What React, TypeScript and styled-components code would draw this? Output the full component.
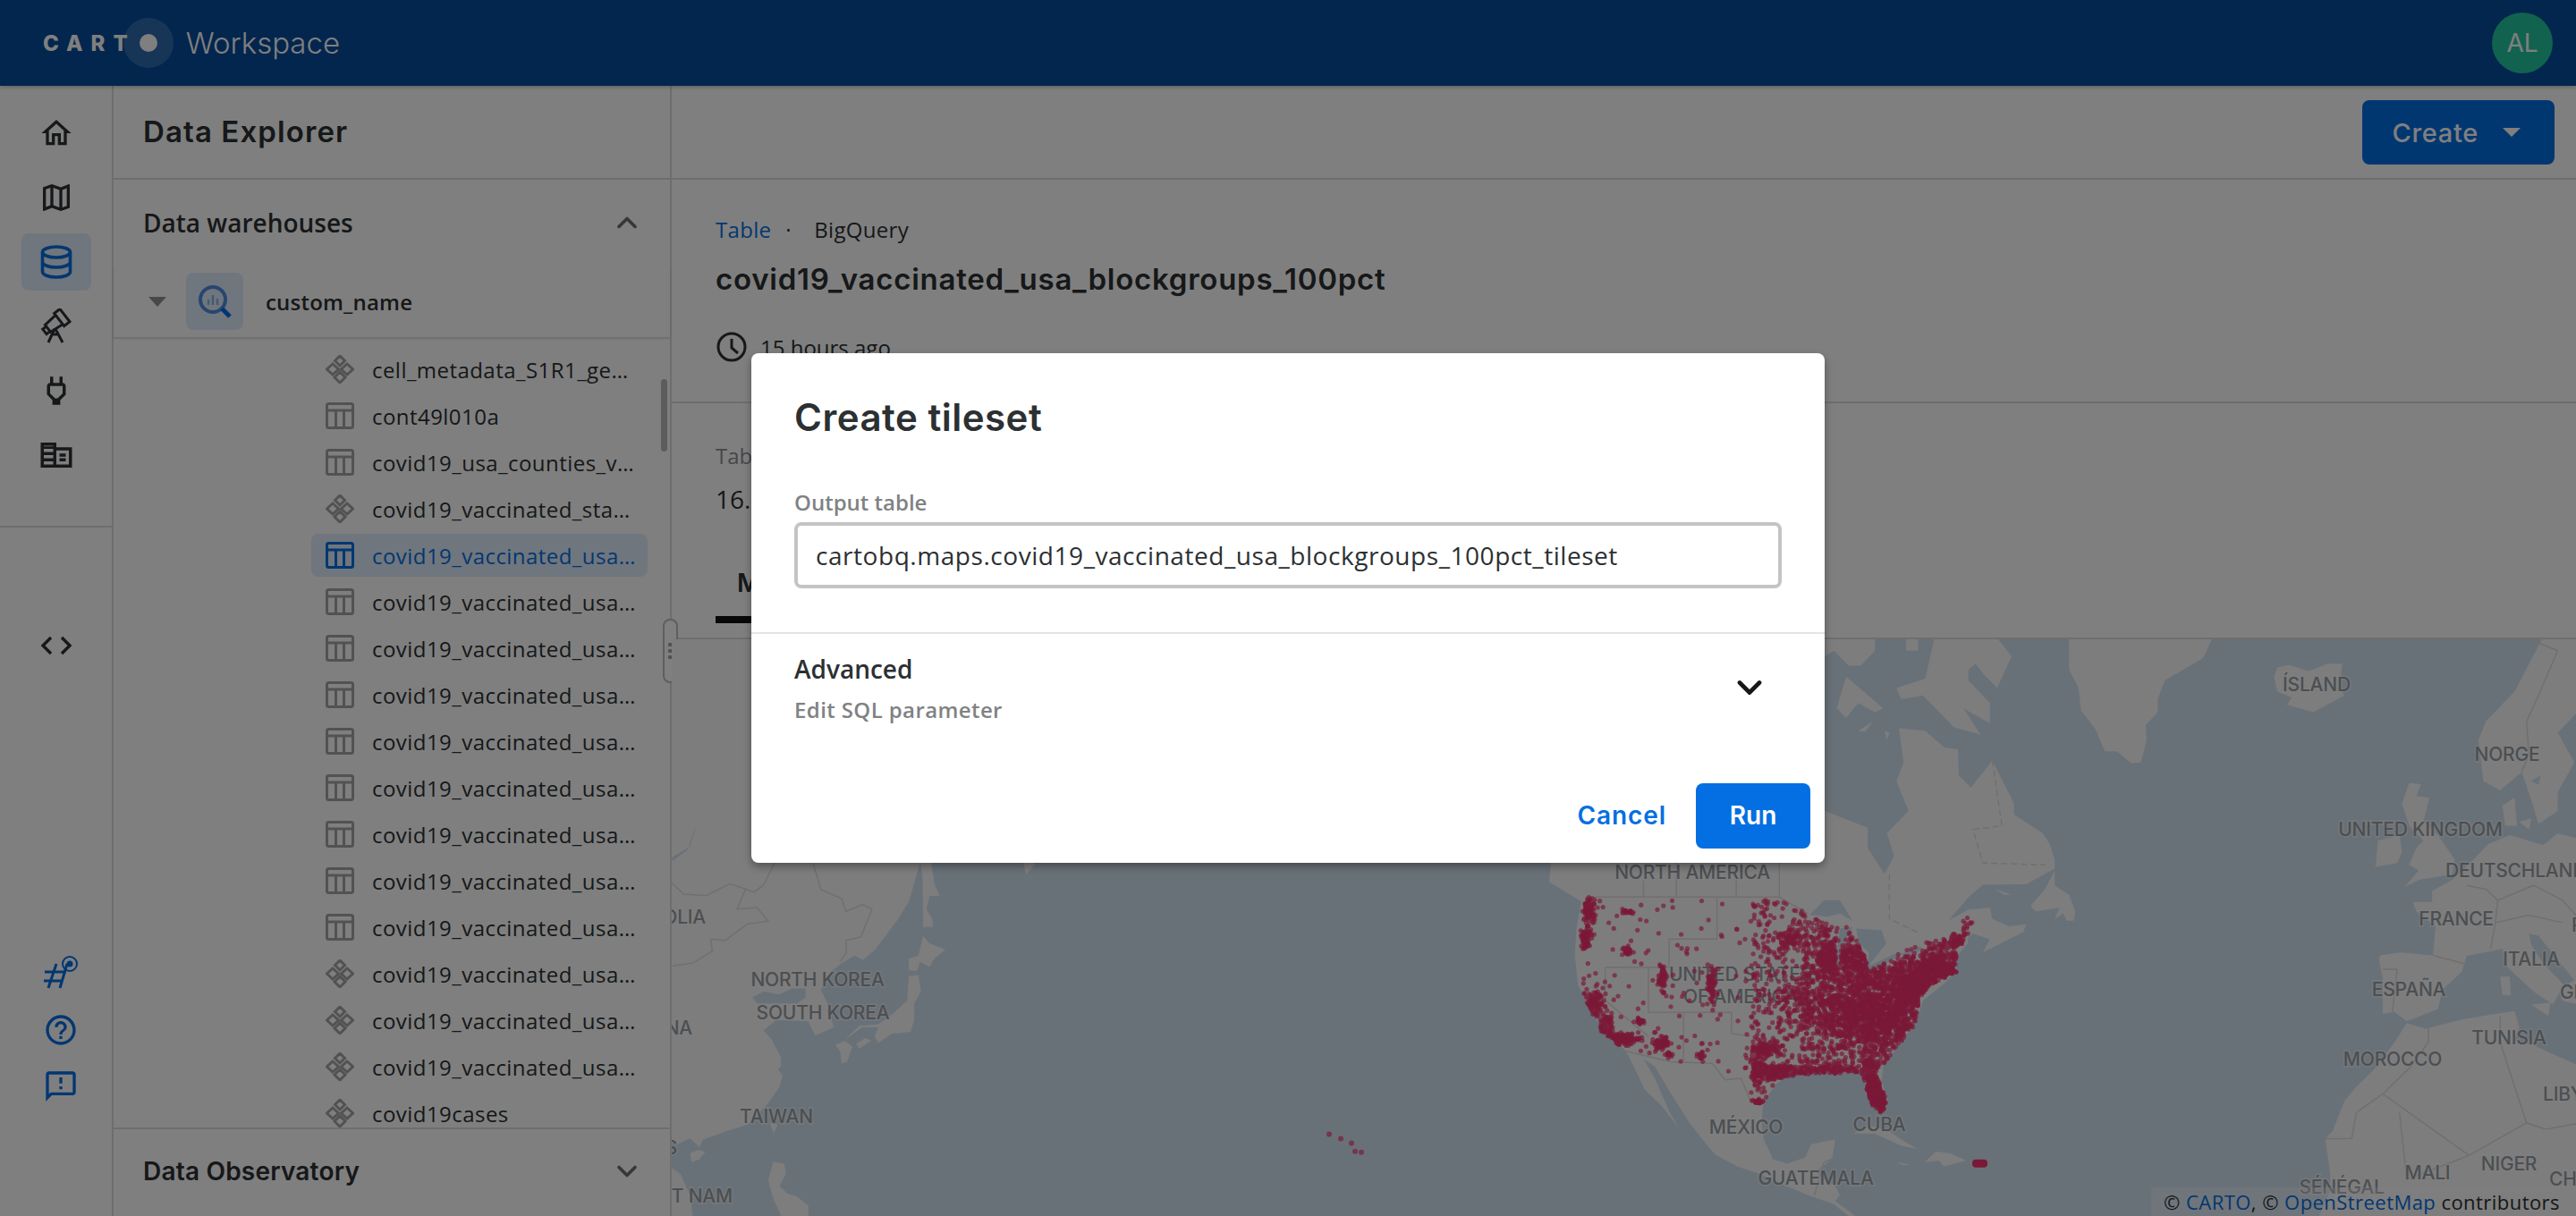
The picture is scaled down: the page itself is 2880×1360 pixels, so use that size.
import React from 'react';
import styled, { createGlobalStyle } from 'styled-components';
import { ChevronDown, ChevronUp } from 'lucide-react';

const HEADING_FONT = `'Inter', 'Open Sans', sans-serif`;
const BODY_FONT = `'Open Sans', 'Noto Sans', sans-serif`;

const INK = '#2c3032';
const PRIMARY = '#036fe2';
const LINE = '#dcdcdc';
const WATER = '#d2e2f0';
const LAND = '#fbfbfb';

const GlobalStyle = createGlobalStyle`
  html, body {
    margin: 0;
    width: 100%;
    height: 100%;
    overflow: hidden;
    background: #fff;
    font-family: ${BODY_FONT};
    color: ${INK};
  }
  * { box-sizing: border-box; }
`;

const Page = styled.div`
  position: relative;
  display: flex;
  flex-direction: column;
  width: 2880px;
  height: 1360px;
  overflow: hidden;
`;

const TopBar = styled.header`
  position: relative;
  z-index: 1;
  flex: none;
  display: flex;
  align-items: center;
  justify-content: space-between;
  height: 96px;
  padding: 0 26px 0 48px;
  background: #064c9e;
  box-shadow: 0 2px 4px rgba(0, 0, 0, 0.2);
  color: #fff;
`;

const Logo = styled.div`
  display: flex;
  align-items: center;
`;

const LogoWord = styled.span`
  font-family: ${HEADING_FONT};
  font-weight: 800;
  font-size: 24px;
  letter-spacing: 9px;
`;

const LogoRing = styled.span`
  display: flex;
  align-items: center;
  justify-content: center;
  width: 56px;
  height: 56px;
  margin-left: -14px;
  border-radius: 50%;
  background: rgba(255, 255, 255, 0.17);

  &::after {
    content: '';
    width: 20px;
    height: 20px;
    border-radius: 50%;
    background: #fff;
  }
`;

const ProductName = styled.span`
  margin-left: 14px;
  font-family: ${HEADING_FONT};
  font-weight: 300;
  font-size: 33px;
`;

const Avatar = styled.div`
  display: flex;
  align-items: center;
  justify-content: center;
  width: 68px;
  height: 68px;
  border-radius: 50%;
  background: #24c4a0;
  font-family: ${HEADING_FONT};
  font-size: 28px;
`;

const Body = styled.div`
  flex: 1;
  display: flex;
  min-height: 0;
`;

const Rail = styled.nav`
  flex: none;
  display: flex;
  flex-direction: column;
  width: 127px;
  border-right: 2px solid ${LINE};
`;

const RailTop = styled.div`
  display: flex;
  flex-direction: column;
  gap: 8px;
  height: 494px;
  padding: 21px 0 0 24px;
  border-bottom: 2px solid ${LINE};
`;

const RailButton = styled.div<{ $active?: boolean }>`
  flex: none;
  display: flex;
  align-items: center;
  justify-content: center;
  width: 78px;
  height: 64px;
  border-radius: 8px;
  background: ${({ $active }) => ($active ? 'rgba(3, 111, 226, 0.12)' : 'transparent')};
  color: ${({ $active }) => ($active ? PRIMARY : INK)};
`;

const RailCode = styled(RailButton)`
  margin: 100px 0 0 24px;
`;

const RailBottom = styled.div`
  display: flex;
  flex-direction: column;
  align-items: center;
  gap: 23px;
  width: 136px;
  margin-top: auto;
  padding-bottom: 125px;
  color: ${PRIMARY};
`;

const Explorer = styled.aside`
  position: relative;
  flex: none;
  display: flex;
  flex-direction: column;
  width: 624px;
  border-right: 2px solid ${LINE};
`;

const ExplorerTitle = styled.h1`
  flex: none;
  display: flex;
  align-items: center;
  height: 105px;
  margin: 0;
  padding: 0 0 2px 33px;
  border-bottom: 2px solid ${LINE};
  font-family: ${HEADING_FONT};
  font-weight: 600;
  font-size: 33px;
  letter-spacing: 1.1px;
`;

const SectionHead = styled.div<{ $height: number }>`
  flex: none;
  display: flex;
  align-items: center;
  justify-content: space-between;
  height: ${({ $height }) => $height}px;
  padding: 0 30px 0 33px;
  font-weight: 600;
  font-size: 28px;
`;

const ObservatoryHead = styled(SectionHead)`
  padding-bottom: 3px;
  border-top: 2px solid ${LINE};
  font-family: ${HEADING_FONT};
  letter-spacing: 0.2px;
`;

const ConnectionRow = styled.div`
  flex: none;
  display: flex;
  align-items: center;
  height: 80px;
  padding: 0 0 0 39px;
  box-shadow: 0 2px 2px rgba(0, 0, 0, 0.14);
  font-weight: 600;
  font-size: 24px;
  letter-spacing: 0.2px;
`;

const Caret = styled.span`
  width: 0;
  height: 0;
  border-left: 10px solid transparent;
  border-right: 10px solid transparent;
  border-top: 11px solid #8f9192;
`;

const ConnectionBadge = styled.span`
  display: flex;
  align-items: center;
  justify-content: center;
  width: 64px;
  height: 64px;
  margin: 0 25px 0 22px;
  border-radius: 8px;
  background: rgba(3, 111, 226, 0.12);
`;

const TreeList = styled.ul`
  flex: 1;
  min-height: 0;
  margin: 0;
  padding: 10px 0 0;
  list-style: none;
  overflow: hidden;
`;

const TreeRow = styled.li<{ $active?: boolean }>`
  display: flex;
  align-items: center;
  gap: 20px;
  height: 48px;
  margin: 2px 25px 4px 221px;
  padding-left: 16px;
  border-radius: 8px;
  background: ${({ $active }) => ($active ? 'rgba(3, 111, 226, 0.12)' : 'transparent')};
  color: ${({ $active }) => ($active ? PRIMARY : INK)};
  font-size: 24px;
  letter-spacing: 0.45px;
`;

const TreeIcon = styled.svg<{ $active?: boolean }>`
  flex: none;
  width: 32px;
  height: 32px;
  fill: none;
  stroke: ${({ $active }) => ($active ? PRIMARY : '#a4a5a6')};
  stroke-width: 3;
`;

const TreeLabel = styled.span`
  width: 296px;
  white-space: nowrap;
  overflow: hidden;
  text-overflow: ellipsis;
`;

const ScrollThumb = styled.span`
  position: absolute;
  top: 328px;
  right: 3px;
  width: 7px;
  height: 81px;
  border-radius: 4px;
  background: #b9b9b9;
`;

const ResizeHandle = styled.span`
  position: absolute;
  top: 596px;
  right: -9px;
  display: flex;
  flex-direction: column;
  align-items: center;
  justify-content: center;
  gap: 3px;
  width: 17px;
  height: 72px;
  border: 2px solid #bdbdbd;
  border-radius: 8px;
  background: #fff;

  i {
    width: 5px;
    height: 4px;
    border-radius: 1px;
    background: #a4a5a6;
  }
`;

const Main = styled.main`
  flex: 1;
  display: flex;
  flex-direction: column;
  min-width: 0;
`;

const MainToolbar = styled.div`
  flex: none;
  display: flex;
  justify-content: flex-end;
  height: 105px;
  padding: 16px 24px 0 0;
  border-bottom: 2px solid ${LINE};
`;

const CreateButton = styled.div`
  display: flex;
  align-items: center;
  gap: 27px;
  height: 72px;
  padding: 0 38px 0 33px;
  border-radius: 8px;
  background: ${PRIMARY};
  color: #fff;
  font-family: ${HEADING_FONT};
  font-weight: 500;
  font-size: 29px;
  letter-spacing: 0.7px;
`;

const CreateCaret = styled.span`
  width: 0;
  height: 0;
  border-left: 10px solid transparent;
  border-right: 10px solid transparent;
  border-top: 10px solid #fff;
`;

const InfoBlock = styled.section`
  flex: none;
  height: 250px;
  padding: 36px 0 0 49px;
  border-bottom: 2px solid ${LINE};
`;

const Breadcrumb = styled.div`
  display: flex;
  align-items: center;
  font-size: 24px;
  line-height: 40px;
  letter-spacing: 0.3px;

  b {
    font-weight: 400;
    color: ${PRIMARY};
  }
  i {
    width: 48px;
    padding-left: 16px;
    font-style: normal;
  }
`;

const TableName = styled.h2`
  margin: 15px 0 0;
  font-family: ${HEADING_FONT};
  font-weight: 600;
  font-size: 33px;
  line-height: 40px;
  letter-spacing: 0.75px;
`;

const UpdatedRow = styled.div`
  display: flex;
  align-items: center;
  gap: 14px;
  margin-top: 38px;
  font-size: 24px;
`;

const StatsBlock = styled.section`
  flex: none;
  height: 264px;
  padding: 44px 0 0 49px;
  border-bottom: 2px solid ${LINE};
`;

const StatLabel = styled.div`
  font-size: 24px;
  line-height: 30px;
  color: #8e8f90;
`;

const StatValue = styled.div`
  margin-top: 14px;
  font-size: 28px;
  line-height: 38px;
`;

const TabStrip = styled.div`
  display: flex;
  margin-top: 44px;
`;

const Tab = styled.div`
  height: 76px;
  padding: 14px 24px 0;
  border-bottom: 8px solid #111;
  font-family: ${HEADING_FONT};
  font-weight: 600;
  font-size: 28px;
`;

const MapPanel = styled.section`
  position: relative;
  flex: 1;
  min-height: 0;
  overflow: hidden;
  background: ${WATER};
`;

const MapCanvas = styled.svg`
  display: block;
  width: 100%;
  height: 100%;
`;

const MapLabel = styled.text`
  font-family: ${HEADING_FONT};
  font-weight: 500;
  font-size: 21px;
  letter-spacing: -0.2px;
  fill: #989ea5;
  stroke: rgba(255, 255, 255, 0.5);
  stroke-width: 3px;
  paint-order: stroke;
`;

const Border = styled.polyline<{ $dashed?: boolean }>`
  fill: none;
  stroke: #e6dcdc;
  stroke-width: 1.5;
  stroke-dasharray: ${({ $dashed }) => ($dashed ? '7 4' : 'none')};
`;

const Attribution = styled.div`
  position: absolute;
  right: 0;
  bottom: 0;
  display: flex;
  align-items: center;
  height: 32px;
  padding: 0 18px 0 14px;
  background: rgba(255, 255, 255, 0.3);
  border-radius: 4px 0 0 0;
  font-size: 22px;
  letter-spacing: 0.45px;
  white-space: pre;

  b {
    font-weight: 400;
    color: ${PRIMARY};
  }
`;

const Scrim = styled.div`
  position: absolute;
  z-index: 2;
  inset: 0;
  display: flex;
  align-items: center;
  justify-content: center;
  background: rgba(0, 0, 0, 0.5);
`;

const Modal = styled.div`
  display: flex;
  flex-direction: column;
  width: 1200px;
  height: 570px;
  border-radius: 8px;
  background: #fff;
  box-shadow: 0 4px 10px rgba(0, 0, 0, 0.35);
`;

const ModalBody = styled.div`
  flex: none;
  height: 314px;
  padding: 44px 48px 0;
  border-bottom: 2px solid #e4e4e4;
`;

const ModalTitle = styled.h3`
  margin: 0;
  font-family: ${HEADING_FONT};
  font-weight: 600;
  font-size: 42px;
  line-height: 56px;
  letter-spacing: 0.5px;
`;

const FieldLabel = styled.div`
  margin-top: 51px;
  font-weight: 600;
  font-size: 24px;
  line-height: 32px;
  color: #808284;
`;

const TextField = styled.div`
  display: flex;
  align-items: center;
  height: 74px;
  margin-top: 6px;
  padding-left: 20px;
  border: 4px solid #c4c4c4;
  border-radius: 8px;
  font-size: 28px;
  letter-spacing: 0.55px;
`;

const Advanced = styled.div`
  flex: 1;
  display: flex;
  justify-content: space-between;
  padding: 20px 62px 0 48px;
`;

const AdvancedTitle = styled.div`
  font-weight: 600;
  font-size: 28px;
  line-height: 38px;
`;

const AdvancedHint = styled.div`
  margin-top: 11px;
  font-weight: 600;
  font-size: 24px;
  line-height: 32px;
  letter-spacing: 0.4px;
  color: #808284;
`;

const AdvancedChevron = styled.span`
  margin-top: 18px;
  color: #16181a;
`;

const ModalActions = styled.div`
  flex: none;
  display: flex;
  align-items: center;
  justify-content: flex-end;
  gap: 33px;
  height: 90px;
  padding: 0 16px 16px 0;
`;

const TextButton = styled.span`
  font-family: ${HEADING_FONT};
  font-weight: 600;
  font-size: 28px;
  letter-spacing: 0.9px;
  color: ${PRIMARY};
`;

const RunButton = styled.span`
  display: flex;
  align-items: center;
  justify-content: center;
  width: 128px;
  height: 73px;
  border-radius: 8px;
  background: ${PRIMARY};
  color: #fff;
  font-family: ${HEADING_FONT};
  font-weight: 600;
  font-size: 28px;
`;

type Pt = [number, number];

// reference crops used while tracing, each with its own offset and scale
const crop = (ox: number, oy: number, sx: number, sy: number) => (pts: Pt[]): Pt[] =>
  pts.map(([x, y]) => [ox + x / sx, oy + y / sy] as Pt);
const west = crop(750, 960, 2.8, 3);
const usa = crop(1700, 960, 2.8, 3);
const east = crop(2040, 710, 1.867, 2.412);

const toPoints = (pts: Pt[]) => pts.map(([x, y]) => `${x.toFixed(1)},${y.toFixed(1)}`).join(' ');

const LAND_SHAPES: Pt[][] = [
  // asia
  west([[-10, -760], [790, -760], [780, 20], [745, 150], [710, 210], [640, 310], [600, 345], [575, 330], [535, 355], [500, 385], [470, 445], [490, 490], [510, 570], [452, 597], [430, 550], [330, 545], [290, 580], [315, 610], [345, 670], [345, 700], [335, 710], [350, 730], [340, 770], [300, 830], [240, 895], [180, 915], [100, 945], [90, 970], [60, 940], [20, 960], [-10, 930], [-10, 1030], [30, 1060], [60, 1130], [70, 1210], [-10, 1210]]),
  west([[60, 990], [85, 980], [108, 985], [90, 1010], [65, 1020]]),
  west([[310, 890], [335, 895], [322, 925]]),
  west([[782, 20], [815, 20], [825, 90], [842, 132], [810, 130], [800, 175], [820, 210], [820, 235], [790, 235], [788, 70]]),
  west([[790, 265], [810, 290], [860, 310], [825, 340], [810, 368], [780, 350], [770, 382], [745, 380], [745, 340], [775, 330]]),
  west([[745, 400], [775, 395], [783, 450], [762, 490], [762, 545], [750, 585], [690, 592], [650, 622], [638, 600], [650, 570], [600, 570], [545, 610], [590, 565], [650, 560], [700, 520], [740, 480]]),
  west([[515, 630], [545, 615], [568, 635], [552, 685], [535, 690], [530, 650]]),
  west([[580, 625], [610, 605], [628, 615], [590, 640]]),
  west([[1100, 0], [1140, 25], [1112, 60]]),
  west([[320, 1020], [355, 1025], [360, 1060], [340, 1100], [365, 1125], [395, 1135], [430, 1165], [430, 1210], [350, 1210], [320, 1140], [305, 1080]]),
  // north and central america
  [
    [1734, 800],
    ...usa([[95, 20], [90, 85], [190, 150], [175, 240], [170, 330], [180, 430], [240, 550], [330, 650], [345, 680], [390, 780], [440, 830], [495, 905], [465, 850], [420, 740], [385, 675], [420, 700], [470, 790], [530, 890], [585, 965], [610, 995], [680, 1035], [750, 1060], [820, 1095], [900, 1130], [980, 1160], [1040, 1210], [1060, 1210], [985, 1150], [1000, 1130], [985, 1100], [945, 1075], [925, 1050], [975, 1010], [985, 945], [910, 960], [890, 1005], [835, 1025], [790, 1010], [760, 940], [755, 880], [760, 820], [800, 760], [850, 720], [920, 710], [1000, 715], [1060, 710], [1080, 740], [1080, 790], [1110, 830], [1135, 860], [1148, 810], [1130, 750], [1135, 700], [1190, 620], [1235, 560], [1260, 480], [1330, 420], [1365, 380], [1355, 345], [1400, 290]]),
    ...east([[299, 820], [310, 810], [345, 825], [330, 860], [415, 805], [420, 785], [430, 740], [480, 635], [480, 610], [470, 570], [455, 540], [395, 490], [395, 460], [350, 345], [305, 418], [280, 385], [278, 315], [250, 310], [210, 265], [155, 258], [165, 350], [150, 400], [175, 480], [130, 540], [145, 600], [125, 650], [90, 580], [90, 525], [0, 480], [-60, 420]]),
    [1900, 800],
  ],
  // arctic islands and greenland
  east([[-20, 0], [105, 0], [105, 50], [75, 90], [50, 90], [20, 50], [-20, 80]]),
  east([[170, 0], [195, 0], [195, 50], [170, 50]]),
  east([[232, 0], [350, 0], [390, 65], [360, 150], [330, 110], [315, 85], [300, 100], [300, 130], [345, 190], [345, 245], [290, 205], [325, 275], [270, 255], [205, 170], [160, 180], [150, 150], [210, 125]]),
  east([[45, 120], [100, 180], [122, 205], [105, 215], [70, 190], [45, 230], [25, 205]]),
  east([[70, 265], [100, 240], [85, 268]]),
  east([[125, 265], [135, 270], [130, 290]]),
  east([[510, 0], [815, 0], [790, 70], [710, 130], [695, 180], [695, 215], [670, 250], [672, 290], [660, 350], [640, 352], [610, 320], [585, 320], [565, 260], [535, 210], [530, 150], [510, 100]]),
  east([[945, 95], [970, 88], [1010, 105], [1050, 85], [1080, 85], [1075, 150], [1085, 170], [1020, 215], [965, 195], [975, 175], [945, 160], [938, 120]]),
  // europe
  east([[1505, 0], [1575, 0], [1575, 210], [1530, 270], [1565, 350], [1530, 430], [1530, 480], [1490, 515], [1475, 450], [1455, 375], [1410, 425], [1375, 400], [1365, 290], [1380, 240], [1440, 160]]),
  east([[1415, 465], [1440, 445], [1445, 520], [1420, 520]]),
  east([[1450, 510], [1475, 500], [1470, 530]]),
  east([[1430, 545], [1500, 572], [1530, 540], [1575, 555], [1575, 1000], [1540, 990], [1535, 965], [1520, 1000], [1480, 965], [1425, 900], [1415, 850], [1340, 870], [1335, 890], [1330, 912], [1290, 960], [1280, 1012], [1215, 1045], [1190, 1020], [1165, 1025], [1165, 930], [1157, 880], [1160, 868], [1200, 860], [1270, 868], [1275, 790], [1235, 750], [1228, 725], [1268, 725], [1268, 695], [1310, 665], [1355, 610], [1385, 570]]),
  east([[1155, 560], [1200, 545], [1205, 590], [1195, 620], [1150, 630]]),
  east([[1205, 460], [1220, 405], [1245, 408], [1235, 440], [1262, 445], [1250, 510], [1280, 545], [1315, 610], [1310, 650], [1240, 665], [1210, 685], [1240, 640], [1220, 625], [1235, 580], [1250, 560], [1220, 520]]),
  east([[1410, 925], [1430, 925], [1432, 975], [1415, 975]]),
  east([[1475, 1000], [1515, 995], [1510, 1030]]),
  // africa
  east([[1215, 1050], [1255, 1065], [1330, 1040], [1400, 1025], [1440, 1018], [1450, 1060], [1440, 1095], [1480, 1110], [1575, 1165], [1575, 1575], [1030, 1575], [1055, 1500], [1055, 1450], [1045, 1360], [1060, 1340], [1085, 1260], [1110, 1220], [1150, 1170], [1190, 1100]]),
  // caribbean
  usa([[1040, 925], [1100, 900], [1150, 915], [1200, 950], [1240, 975], [1190, 965], [1110, 925]]),
  usa([[1265, 1020], [1300, 985], [1345, 990], [1395, 1015], [1325, 1035], [1310, 1015]]),
  usa([[1180, 1020], [1220, 1030], [1195, 1030]]),
];

const GREAT_LAKES: Pt[][] = [
  [[905, 195], [950, 145], [1000, 145], [1040, 215], [1000, 190], [960, 200]],
  [[1000, 240], [1040, 235], [1005, 300], [1000, 370], [985, 360], [995, 280]],
  [[1050, 240], [1130, 245], [1145, 290], [1085, 370], [1090, 320], [1060, 290]],
  [[1085, 385], [1190, 330], [1170, 325], [1090, 365]],
  [[1190, 325], [1250, 300], [1260, 310], [1200, 335]],
];

const WATER_SHAPES: Pt[][] = [
  ...GREAT_LAKES.map(usa),
  // st lawrence
  east([[258, 775], [300, 712], [330, 678], [420, 677], [480, 635], [470, 690], [432, 745], [420, 785], [385, 790], [350, 770], [345, 740], [300, 745]]),
  // adriatic
  east([[1470, 810], [1490, 815], [1530, 880], [1565, 935], [1545, 950], [1500, 890], [1475, 840]]),
  // bohai and baikal
  west([[255, 470], [290, 450], [340, 460], [380, 440], [422, 440], [422, 470], [395, 490], [330, 490], [270, 490]]),
  crop(740, 700, 1.742, 2.376)([[20, 630], [50, 600], [70, 520], [55, 590], [20, 620]]),
  // vanern
  east([[1475, 400], [1495, 385], [1490, 410]]),
];

const ISLANDS_OVER_WATER: Pt[][] = [
  east([[430, 735], [460, 690], [480, 640], [480, 680], [510, 705], [523, 750], [520, 775], [505, 775], [498, 755], [480, 770], [490, 740], [440, 750]]),
  east([[355, 690], [390, 705], [375, 705]]),
];

const BORDERS: Pt[][] = [
  west([[0, 85], [40, 125], [110, 130], [185, 90], [260, 118], [290, 95], [325, 20]]),
  west([[235, 105], [208, 175], [270, 170], [305, 215], [240, 225], [170, 280], [125, 275], [130, 315], [70, 355], [5, 365]]),
  west([[445, 20], [470, 110], [535, 140], [548, 183], [600, 160], [630, 175], [595, 268], [548, 280], [550, 320], [530, 350]]),
  usa([[205, 135], [810, 135], [900, 190]]),
  usa([[385, 80], [385, 135]]),
  usa([[488, 20], [488, 135]]),
  usa([[675, 80], [675, 135]]),
  usa([[810, 20], [810, 135]]),
  usa([[265, 370], [465, 370], [465, 275], [615, 275], [615, 135]]),
  usa([[400, 370], [400, 520], [660, 520], [660, 590], [720, 600]]),
  usa([[510, 520], [510, 680]]),
  usa([[330, 650], [470, 685], [600, 690], [640, 745], [690, 740], [720, 815]]),
  usa([[265, 370], [265, 480], [400, 600]]),
  usa([[920, 1130], [950, 1020], [975, 1010]]),
  east([[1045, 1360], [1100, 1360], [1110, 1290], [1165, 1240], [1345, 1405], [1465, 1318], [1505, 1335], [1568, 1320]]),
  east([[1165, 1240], [1225, 1165], [1260, 1100], [1260, 1065]]),
  east([[1200, 1290], [1215, 1470], [1345, 1405]]),
  east([[1465, 1318], [1430, 1180], [1410, 1100], [1410, 1030]]),
  east([[1165, 905], [1195, 905], [1185, 1020]]),
  east([[1270, 868], [1335, 890]]),
  east([[1340, 680], [1380, 690], [1405, 720], [1400, 780], [1390, 850]]),
  east([[1405, 720], [1480, 680], [1540, 720], [1568, 760]]),
  east([[1400, 780], [1470, 760], [1540, 780]]),
  east([[1470, 18], [1530, 50], [1490, 170], [1465, 240], [1470, 330], [1455, 375]]),
];

const DASHED_BORDERS: Pt[][] = [
  east([[135, 650], [135, 770], [200, 810]]),
  east([[350, 345], [370, 520], [310, 530], [330, 620], [460, 625]]),
];

const LABELS: { text: string; x: number; y: number; anchor?: 'start' | 'end' }[] = [
  { text: 'MONGOLIA', x: 789, y: 1035, anchor: 'end' },
  { text: 'CHINA', x: 774, y: 1158, anchor: 'end' },
  { text: 'NORTH KOREA', x: 914, y: 1104 },
  { text: 'SOUTH KOREA', x: 920, y: 1141 },
  { text: 'TAIWAN', x: 868, y: 1256 },
  { text: 'LAOS', x: 757, y: 1291, anchor: 'end' },
  { text: 'VIET NAM', x: 819, y: 1345, anchor: 'end' },
  { text: 'NORTH AMERICA', x: 1892, y: 985 },
  { text: 'UNITED STATES', x: 1946, y: 1098 },
  { text: 'OF AMERICA', x: 1946, y: 1123 },
  { text: 'MÉXICO', x: 1952, y: 1268 },
  { text: 'CUBA', x: 2101, y: 1265 },
  { text: 'GUATEMALA', x: 2030, y: 1325 },
  { text: 'ÍSLAND', x: 2590, y: 776 },
  { text: 'NORGE', x: 2803, y: 853 },
  { text: 'UNITED KINGDOM', x: 2706, y: 937 },
  { text: 'DEUTSCHLAND', x: 2734, y: 983, anchor: 'start' },
  { text: 'FRANCE', x: 2746, y: 1037 },
  { text: 'POLSKA', x: 2875, y: 1043, anchor: 'start' },
  { text: 'ITALIA', x: 2830, y: 1081 },
  { text: 'ESPAÑA', x: 2693, y: 1115 },
  { text: 'GREECE', x: 2862, y: 1118, anchor: 'start' },
  { text: 'TUNISIA', x: 2805, y: 1169 },
  { text: 'MOROCCO', x: 2675, y: 1193 },
  { text: 'LIBYA', x: 2843, y: 1232, anchor: 'start' },
  { text: 'NIGER', x: 2805, y: 1309 },
  { text: 'MALI', x: 2714, y: 1319 },
  { text: 'CHAD', x: 2850, y: 1326, anchor: 'start' },
  { text: 'SÉNÉGAL', x: 2618, y: 1335 },
];

const US_OUTLINE: Pt[] = [[205, 135], [810, 135], [900, 190], [985, 235], [1040, 235], [1090, 370], [1190, 320], [1270, 285], [1345, 270], [1395, 200], [1415, 215], [1405, 250], [1365, 320], [1365, 385], [1280, 430], [1250, 470], [1235, 560], [1190, 620], [1140, 690], [1110, 720], [1145, 810], [1135, 860], [1100, 830], [1075, 750], [1040, 720], [910, 730], [800, 740], [760, 830], [720, 815], [690, 740], [640, 720], [600, 690], [490, 685], [380, 650], [330, 650], [250, 580], [175, 420], [175, 330], [180, 230]];

const CLUSTERS: [number, number, number, number, number][] = [
  [215, 180, 10, 24, 90], [205, 265, 10, 24, 60], [335, 315, 10, 8, 25], [330, 183, 12, 5, 15],
  [228, 490, 18, 26, 120], [275, 560, 14, 24, 50], [310, 610, 30, 12, 140], [440, 625, 12, 12, 60],
  [465, 660, 5, 5, 15], [562, 665, 5, 9, 15], [598, 430, 7, 32, 70], [445, 405, 7, 22, 50],
  [372, 548, 7, 5, 25], [770, 640, 20, 14, 110], [800, 720, 22, 16, 100], [745, 715, 16, 22, 80],
  [745, 820, 12, 4, 30], [850, 275, 18, 16, 70], [965, 340, 22, 30, 170], [1040, 340, 32, 22, 140],
  [1240, 430, 48, 30, 480], [1300, 370, 42, 26, 300], [1370, 290, 16, 16, 50], [1100, 560, 60, 55, 320],
  [1100, 775, 14, 38, 300], [1130, 820, 6, 20, 60], [930, 710, 85, 8, 110], [1100, 420, 60, 45, 320],
  [1180, 530, 38, 45, 200], [1050, 520, 70, 38, 320], [900, 480, 60, 45, 160], [1105, 862, 6, 3, 8],
];

const inside = ([x, y]: Pt, poly: Pt[]) => {
  let hit = false;
  for (let i = 0, j = poly.length - 1; i < poly.length; j = i++) {
    const [xi, yi] = poly[i];
    const [xj, yj] = poly[j];
    if (yi > y !== yj > y && x < ((xj - xi) * (y - yi)) / (yj - yi) + xi) hit = !hit;
  }
  return hit;
};

const buildDots = (): Pt[] => {
  let seed = 41;
  const rand = () => {
    seed = (seed + 0x6d2b79f5) | 0;
    let t = Math.imul(seed ^ (seed >>> 15), 1 | seed);
    t = (t + Math.imul(t ^ (t >>> 7), 61 | t)) ^ t;
    return ((t ^ (t >>> 14)) >>> 0) / 4294967296;
  };
  const keep = (p: Pt) => inside(p, US_OUTLINE) && !GREAT_LAKES.some((lake) => inside(p, lake));
  const out: Pt[] = [];
  for (let i = 0; i < 14000; i++) {
    const p: Pt = [175 + rand() * 1240, 135 + rand() * 730];
    const density = p[0] < 720 ? 0.028 : p[0] < 880 ? 0.2 : 0.5;
    if (rand() < density && keep(p)) out.push(p);
  }
  CLUSTERS.forEach(([cx, cy, rx, ry, n]) => {
    for (let i = 0; i < n; i++) {
      const a = rand() * Math.PI * 2;
      const r = Math.sqrt(-2 * Math.log(1 - rand() * 0.98));
      const p: Pt = [cx + Math.cos(a) * r * rx, cy + Math.sin(a) * r * ry];
      if (keep(p)) out.push(p);
    }
  });
  return usa(out);
};

const DOTS = buildDots();
const HAWAII: Pt[] = [[1486, 1269], [1499, 1274], [1511, 1279], [1515, 1288], [1522, 1289]];

const WorldMap = () => (
  <MapCanvas viewBox="751 718 2129 642" preserveAspectRatio="none">
    <g fill={LAND}>
      {LAND_SHAPES.map((pts, i) => <polygon key={i} points={toPoints(pts)} />)}
    </g>
    <g fill={WATER}>
      {WATER_SHAPES.map((pts, i) => <polygon key={i} points={toPoints(pts)} />)}
    </g>
    <g fill={LAND}>
      {ISLANDS_OVER_WATER.map((pts, i) => <polygon key={i} points={toPoints(pts)} />)}
    </g>
    {BORDERS.map((pts, i) => <Border key={i} points={toPoints(pts)} />)}
    {DASHED_BORDERS.map((pts, i) => <Border key={i} $dashed points={toPoints(pts)} />)}
    {LABELS.map((l) => (
      <MapLabel key={l.text} x={l.x} y={l.y} textAnchor={l.anchor ?? 'middle'}>{l.text}</MapLabel>
    ))}
    <g fill="#f5306e" fillOpacity={0.68}>
      {DOTS.map(([x, y], i) => <circle key={i} cx={x} cy={y} r={2.6} />)}
      {HAWAII.map(([x, y], i) => <circle key={i} cx={x} cy={y} r={3} />)}
    </g>
    <rect x={2205} y={1297} width={17} height={9} rx={4} fill="#f5306e" />
  </MapCanvas>
);

const MuiIcon = ({ d, size = 40 }: { d: string; size?: number }) => (
  <svg width={size} height={size} viewBox="0 0 24 24" fill="currentColor"><path d={d} /></svg>
);

const HOME = 'M12 5.69l5 4.5V18h-2v-6H9v6H7v-7.81l5-4.5M12 3L2 12h3v8h6v-6h2v6h6v-8h3L12 3z';
const MAP = 'M20.5 3l-.16.03L15 5.1 9 3 3.36 4.9c-.21.07-.36.25-.36.48V20.5c0 .28.22.5.5.5l.16-.03L9 18.9l6 2.1 5.64-1.9c.21-.07.36-.25.36-.48V3.5c0-.28-.22-.5-.5-.5zM10 5.47l4 1.4v11.66l-4-1.4V5.47zm-5 .99l3-1.01v11.7l-3 1.16V6.46zm14 11.08l-3 1.01V6.86l3-1.16v11.84z';
const PLUG = 'M16 7l-.01-4H14v4h-4V3H8v4h-.01C7 7 6 8 6 9v5.49L9.5 18v3h5v-3l3.5-3.5V9c0-1-1-2-2-2zm0 6.66L12.83 16.8h-1.66L8 13.65V9.02c0-.01 8-.01 8 0v4.64z';
const BUILDING = 'M12 7V4H2v16h20V7H12zM10 18H4v-2h6v2zm0-4H4v-2h6v2zm0-4H4V8h6v2zm0-3.6H4V6h6v.4zM20 18h-8V9h8v9zm-2-7h-4v2h4v-2zm0 3h-4v2h4v-2z';
const HELP = 'M11 18h2v-2h-2v2zm1-16C6.48 2 2 6.48 2 12s4.48 10 10 10 10-4.48 10-10S17.52 2 12 2zm0 18c-4.41 0-8-3.59-8-8s3.59-8 8-8 8 3.59 8 8-3.59 8-8 8zm0-14c-2.21 0-4 1.79-4 4h2c0-1.1.9-2 2-2s2 .9 2 2c0 2-3 1.75-3 5h2c0-2.25 3-2.5 3-5 0-2.21-1.79-4-4-4z';
const FEEDBACK = 'M20 2H4c-1.1 0-2 .9-2 2v18l4-4h14c1.1 0 2-.9 2-2V4c0-1.1-.9-2-2-2zm0 14H5.17L4 17.17V4h16v12zm-9-4h2v2h-2zm0-6h2v4h-2z';

const DatabaseIcon = () => (
  <svg width={40} height={40} viewBox="0 0 40 40" fill="none" stroke="currentColor" strokeWidth={3.6}>
    <ellipse cx={20} cy={9} rx={15.500} ry={6} />
    <path d="M4.500 9v22c0 3.300 6.900 6 15.500 6s15.500-2.700 15.500-6V9M4.500 20c0 3.300 6.900 6 15.500 6s15.500-2.700 15.500-6" />
  </svg>
);

const TelescopeIcon = () => (
  <svg width={40} height={40} viewBox="0 0 40 40" fill="none" stroke="currentColor" strokeWidth={3}>
    <g transform="rotate(-38 20 15)">
      <path d="M3 12h5v7H3zM8 10l16-1.500v13L8 20zM24 6h8v18h-8z" />
    </g>
    <path d="M18 23l-7 15M19 23l8 15M16 29h6" />
  </svg>
);

const CodeIcon = () => (
  <svg width={40} height={40} viewBox="0 0 40 40" fill="none" stroke="currentColor" strokeWidth={3.4}>
    <path d="M14 11l-9 9 9 9M26 11l9 9-9 9" />
  </svg>
);

const SqlEyeIcon = () => (
  <svg width={40} height={40} viewBox="0 0 40 40" fill="none" stroke="currentColor" strokeWidth={3}>
    <path d="M14 11L5 38M26 11l-8 27M1 20h24M0 30h21" transform="translate(1 -2)" />
    <circle cx={30} cy={9} r={8} strokeWidth={2} />
    <circle cx={30} cy={9} r={3.500} fill="currentColor" stroke="none" />
  </svg>
);

const BigQueryIcon = () => (
  <svg width={40} height={40} viewBox="0 0 40 40" fill="none" stroke="#4f8de0">
    <circle cx={18} cy={18} r={14} strokeWidth={4} />
    <path d="M13 18v6M18 13v11M23 17v7" strokeWidth={2.500} stroke="#8ab2e8" />
    <path d="M28 28l9 9" strokeWidth={5} stroke="#036fe2" />
  </svg>
);

const ClockIcon = () => (
  <svg width={36} height={36} viewBox="0 0 36 36" fill="none" stroke="currentColor" strokeWidth={3}>
    <circle cx={18} cy={18} r={15} />
    <path d="M18 9v10l7 6" />
  </svg>
);

const TableIcon = ({ active }: { active?: boolean }) => (
  <TreeIcon $active={active} viewBox="0 0 32 32">
    <rect x={1.500} y={2.500} width={29} height={27} rx={2} />
    <path d="M1.500 10h29M11.500 10v19M20.500 10v19" />
  </TreeIcon>
);

const TilesetIcon = () => (
  <TreeIcon viewBox="0 0 32 32">
    <path d="M16 1l5.500 5.500L16 12l-5.500-5.500zM8 10l6.500 6L8 22l-6.500-6zM24 10l6.500 6L24 22l-6.500-6zM16 19l6 6-6 6-6-6z" />
  </TreeIcon>
);

const FULL = 'covid19_vaccinated_usa_blockgroups_100pct';
const TREE: { name: string; kind: 'table' | 'tileset'; active?: boolean }[] = [
  { name: 'cell_metadata_S1R1_geometry_tileset', kind: 'tileset' },
  { name: 'cont49l010a', kind: 'table' },
  { name: 'covid19_usa_counties_vaccinated', kind: 'table' },
  { name: 'covid19_vaccinated_state_tileset', kind: 'tileset' },
  { name: FULL, kind: 'table', active: true },
  ...Array.from({ length: 8 }, () => ({ name: FULL, kind: 'table' as const })),
  ...Array.from({ length: 3 }, () => ({ name: `${FULL}_tileset`, kind: 'tileset' as const })),
  { name: 'covid19cases', kind: 'tileset' },
];

const App = () => (
  <Page>
    <GlobalStyle />
    <TopBar>
      <Logo>
        <LogoWord>CART</LogoWord>
        <LogoRing />
        <ProductName>Workspace</ProductName>
      </Logo>
      <Avatar>AL</Avatar>
    </TopBar>
    <Body>
      <Rail>
        <RailTop>
          <RailButton><MuiIcon d={HOME} /></RailButton>
          <RailButton><MuiIcon d={MAP} /></RailButton>
          <RailButton $active><DatabaseIcon /></RailButton>
          <RailButton><TelescopeIcon /></RailButton>
          <RailButton><MuiIcon d={PLUG} size={42} /></RailButton>
          <RailButton><MuiIcon d={BUILDING} size={42} /></RailButton>
        </RailTop>
        <RailCode><CodeIcon /></RailCode>
        <RailBottom>
          <SqlEyeIcon />
          <MuiIcon d={HELP} />
          <MuiIcon d={FEEDBACK} />
        </RailBottom>
      </Rail>
      <Explorer>
        <ExplorerTitle>Data Explorer</ExplorerTitle>
        <SectionHead $height={96}>
          Data warehouses
          <ChevronUp size={36} color="#6d6f70" strokeWidth={2.4} />
        </SectionHead>
        <ConnectionRow>
          <Caret />
          <ConnectionBadge><BigQueryIcon /></ConnectionBadge>
          custom_name
        </ConnectionRow>
        <TreeList>
          {TREE.map((row, i) => (
            <TreeRow key={i} $active={row.active}>
              {row.kind === 'table' ? <TableIcon active={row.active} /> : <TilesetIcon />}
              <TreeLabel>{row.name}</TreeLabel>
            </TreeRow>
          ))}
        </TreeList>
        <ObservatoryHead $height={99}>
          Data Observatory
          <ChevronDown size={36} color="#6d6f70" strokeWidth={2.4} />
        </ObservatoryHead>
        <ScrollThumb />
        <ResizeHandle><i /><i /><i /></ResizeHandle>
      </Explorer>
      <Main>
        <MainToolbar>
          <CreateButton>Create<CreateCaret /></CreateButton>
        </MainToolbar>
        <InfoBlock>
          <Breadcrumb><b>Table</b><i>·</i>BigQuery</Breadcrumb>
          <TableName>{FULL}</TableName>
          <UpdatedRow><ClockIcon />15 hours ago</UpdatedRow>
        </InfoBlock>
        <StatsBlock>
          <StatLabel>Table size</StatLabel>
          <StatValue>16.4 GB</StatValue>
          <TabStrip><Tab>Map</Tab></TabStrip>
        </StatsBlock>
        <MapPanel>
          <WorldMap />
          <Attribution>© <b>CARTO</b>, © <b>OpenStreetMap</b> contributors</Attribution>
        </MapPanel>
      </Main>
    </Body>
    <Scrim>
      <Modal>
        <ModalBody>
          <ModalTitle>Create tileset</ModalTitle>
          <FieldLabel>Output table</FieldLabel>
          <TextField>cartobq.maps.{FULL}_tileset</TextField>
        </ModalBody>
        <Advanced>
          <div>
            <AdvancedTitle>Advanced</AdvancedTitle>
            <AdvancedHint>Edit SQL parameter</AdvancedHint>
          </div>
          <AdvancedChevron><ChevronDown size={44} strokeWidth={2.6} /></AdvancedChevron>
        </Advanced>
        <ModalActions>
          <TextButton>Cancel</TextButton>
          <RunButton>Run</RunButton>
        </ModalActions>
      </Modal>
    </Scrim>
  </Page>
);

export default App;
